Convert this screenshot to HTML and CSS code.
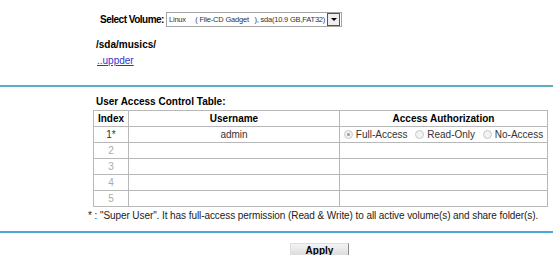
FILE: index.html
```html
<!DOCTYPE html>
<html lang="en">
<head>
    <meta charset="UTF-8">
    <title>User Access Control</title>
    <link rel="stylesheet" href="styles.css">
</head>
<body>
    <div class="volume">
        <label>Select Volume:</label>
        <div class="select">
            <span class="select-text">Linux&nbsp;&nbsp;&nbsp;&nbsp;&nbsp;( File-CD Gadget&nbsp;&nbsp;&nbsp;), sda(10.9 GB,FAT32)</span>
            <span class="select-arrow"></span>
        </div>
    </div>
    <div class="folder">
        <p class="path">/sda/musics/</p>
        <a href="#" class="up">..uppder</a>
    </div>
    <div class="line teal"></div>
    <div class="content">
        <h3>User Access Control Table:</h3>
        <table>
            <tr>
                <th class="idx">Index</th>
                <th class="user">Username</th>
                <th>Access Authorization</th>
            </tr>
            <tr>
                <td class="idx">1*</td>
                <td class="user">admin</td>
                <td>
                    <span class="radio checked"></span>Full-Access
                    <span class="radio"></span>Read-Only
                    <span class="radio"></span>No-Access
                </td>
            </tr>
            <tr><td class="idx off">2</td><td></td><td></td></tr>
            <tr><td class="idx off">3</td><td></td><td></td></tr>
            <tr><td class="idx off">4</td><td></td><td></td></tr>
            <tr><td class="idx off">5</td><td></td><td></td></tr>
        </table>
        <p class="note">* : "Super User". It has full-access permission (Read &amp; Write) to all active volume(s) and share folder(s).</p>
    </div>
    <div class="line blue"></div>
    <div class="actions">
        <button>Apply</button>
    </div>
</body>
</html>
```

FILE: styles.css
```css
body {
    font-family: "Liberation Sans", Arial, sans-serif;
    font-size: 10px;
    color: #000;
    margin: 0;
    padding: 0;
    background-color: #fff;
}
.volume {
    display: flex;
    align-items: center;
    padding: 12px 0 0 100px;
    height: 15px;
}
.volume label {
    font-weight: bold;
    letter-spacing: -0.5px;
    margin-right: 2px;
}
.select {
    display: flex;
    align-items: center;
    height: 13px;
    border: 1px solid #a5a5a5;
    padding-left: 2px;
    width: 172px;
    font-size: 7.5px;
    letter-spacing: -0.2px;
    color: #333;
    white-space: pre;
}
.select-text {
    flex: 1;
    overflow: hidden;
}
.select-arrow {
    width: 11px;
    height: 11px;
    border: 1px solid #555;
    margin-right: 1px;
    background: #eee;
    position: relative;
}
.select-arrow::after {
    content: "";
    position: absolute;
    left: 3px;
    top: 4px;
    border-left: 3px solid transparent;
    border-right: 3px solid transparent;
    border-top: 3px solid #000;
}
.folder {
    padding: 12px 0 0 96px;
    height: 46px;
}
.path {
    font-weight: bold;
    margin: 0 0 5px 0;
}
.up {
    color: #3333cc;
    margin-left: 1px;
}
.line {
    height: 2px;
    width: 100%;
}
.teal {
    background-color: #5bb0bf;
}
.blue {
    background-color: #4aa9d8;
}
.content {
    margin-left: 93px;
    width: 455px;
    padding-top: 9px;
}
.content h3 {
    font-size: 10px;
    margin: 0 0 3px 3px;
}
table {
    width: 455px;
    border-collapse: collapse;
    border: 1px solid #a8a8a8;
}
th, td {
    border: 1px solid #b8b8b8;
    height: 15px;
    padding: 0;
    text-align: center;
    color: #333;
    white-space: nowrap;
}
th {
    font-weight: bold;
    color: #000;
}
.idx {
    width: 34px;
}
.user {
    width: 210px;
}
.off {
    color: #aaa;
}
.radio {
    display: inline-block;
    width: 7px;
    height: 7px;
    border: 1px solid #c8c8c8;
    border-radius: 50%;
    margin: 0 3px 0 5px;
    vertical-align: -1px;
    background: #f2f2f2;
    position: relative;
}
.radio:first-child {
    margin-left: 0;
}
.radio.checked::after {
    content: "";
    position: absolute;
    left: 2px;
    top: 2px;
    width: 3px;
    height: 3px;
    border-radius: 50%;
    background: #999;
}
.note {
    margin: 3px 0 10px -5px;
    color: #222;
    letter-spacing: -0.08px;
    white-space: nowrap;
}
.actions {
    margin-left: 93px;
    width: 455px;
    text-align: center;
    padding-top: 10px;
}
.actions button {
    font-family: "Liberation Sans", Arial, sans-serif;
    font-size: 10px;
    font-weight: bold;
    width: 59px;
    height: 15px;
    padding: 0;
    border: 1px solid #888;
    border-top-color: #ddd;
    border-left-color: #ddd;
    background: linear-gradient(#f4f4f4, #d8d8d8);
    margin-left: -2px;
}
```
